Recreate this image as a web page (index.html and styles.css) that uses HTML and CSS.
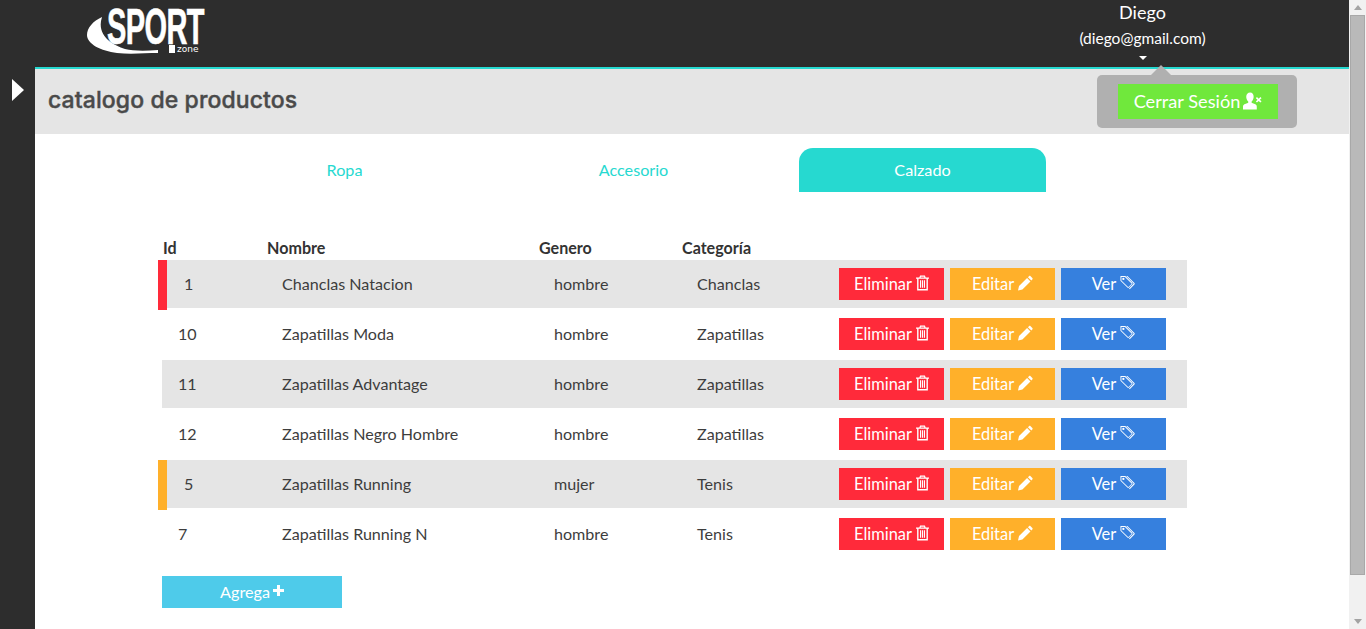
FILE: index.html
```html
<!DOCTYPE html>
<html lang="en">
<head>
  <meta charset="UTF-8" />
  <title>Sport Zone - catalogo de productos</title>
  <link rel="stylesheet" href="styles.css">
</head>
<body>
  <svg class="icon-defs" width="0" height="0">
    <symbol id="i-trash" viewBox="0 0 14 16">
      <path d="M4.400 0h5.200l.8 2H14v1.500h-1.200V16H1.200V3.500H0V2h3.600zM2.700 3.500v11h8.600v-11zM5.300 1.300L5 2h4l-.3-.7zM4.300 5h1.200v8H4.300zM6.400 5h1.200v8H6.400zM8.500 5h1.200v8H8.500z" fill-rule="evenodd"/>
    </symbol>
    <symbol id="i-pencil" viewBox="0 0 16 16">
      <path d="M0 16l1.100-4.700 8.600-8.600 3.600 3.600-8.600 8.600zM10.600 1.800l1.100-1.100c.5-.5 1.200-.5 1.700 0l1.900 1.900c.5.500.5 1.200 0 1.700l-1.100 1.100z"/>
    </symbol>
    <symbol id="i-tag" viewBox="0 0 16 16">
      <path d="M.5.500h5.200l7.300 7.300c.5.500.5 1.100 0 1.600l-3.500 3.500c-.5.500-1.100.5-1.600 0L.5 5.600zM1.500 1.500v3.700l7.100 7.100c.1.100.3.100.4 0l3.300-3.300c.1-.1.1-.3 0-.4L5.200 1.500zM3.600 2.400a1.200 1.200 0 1 1 0 2.400 1.200 1.200 0 0 1 0-2.400zM6.600.5h1.300l7.500 7.400c.5.500.5 1.100 0 1.600l-5 5.200-.8-.8 4.900-5c.1-.1.1-.3 0-.4z" fill-rule="evenodd"/>
    </symbol>
    <symbol id="i-user-x" viewBox="0 0 20 18">
      <path d="M7.500 0c2.400 0 3.700 1.900 3.700 4.500 0 2-.8 3.700-1.900 4.700-.5.500-.4 1.500.3 1.800l3.400 1.500c1 .5 1.500 1.300 1.500 2.500V18H0v-3c0-1.200.6-2 1.500-2.500L5 11c.7-.3.800-1.300.3-1.800C4.200 8.200 3.400 6.500 3.400 4.500 3.400 1.900 5.100 0 7.500 0z"/>
      <path d="M13.500 6l1.200-1.100 1.800 1.800 1.800-1.800L19.500 6l-1.800 1.800 1.800 1.800-1.200 1.100-1.800-1.800-1.800 1.800-1.200-1.100 1.800-1.800z"/>
    </symbol>
  </svg>

  <div class="page">
    <aside class="sidebar"><span class="sidebar-toggle"></span></aside>

    <div class="main">
      <header class="topbar">
        <a class="logo">
          <svg class="logo-swoosh" viewBox="0 0 72 46"><path d="M15 9C6 13 0 20 0 27c0 9 14 16 30 18 14 1.500 28 0 41 0v-3c-13 1-25 1-33-1C25 37 9 27 15 9z" fill="#fff"/></svg>
          <span class="logo-word">SPORT</span>
          <span class="logo-zone">zone</span>
        </a>
        <div class="user-menu">
          <div class="user-name">Diego</div>
          <div class="user-mail">(diego@gmail.com)</div>
          <span class="user-caret"></span>
          <div class="logout-pop">
            <button class="btn-logout">Cerrar Sesión <svg class="ico-user"><use href="#i-user-x"/></svg></button>
          </div>
        </div>
      </header>

      <div class="title-bar"><h1>catalogo de productos</h1></div>

      <nav class="tabs">
        <a class="tab">Ropa</a>
        <a class="tab">Accesorio</a>
        <a class="tab active">Calzado</a>
      </nav>

      <section class="catalog">
        <div class="row head">
          <div class="head-id">Id</div><div>Nombre</div><div>Genero</div><div>Categoría</div>
        </div>

        <div class="row item mark-red">
          <div class="cell-id">1</div><div class="cell">Chanclas Natacion</div><div class="cell">hombre</div><div class="cell">Chanclas</div>
          <div class="actions">
            <button class="btn red">Eliminar <svg class="ico ico-trash"><use href="#i-trash"/></svg></button>
            <button class="btn orange">Editar <svg class="ico"><use href="#i-pencil"/></svg></button>
            <button class="btn blue">Ver <svg class="ico"><use href="#i-tag"/></svg></button>
          </div>
        </div>
        <div class="row item">
          <div class="cell-id">10</div><div class="cell">Zapatillas Moda</div><div class="cell">hombre</div><div class="cell">Zapatillas</div>
          <div class="actions">
            <button class="btn red">Eliminar <svg class="ico ico-trash"><use href="#i-trash"/></svg></button>
            <button class="btn orange">Editar <svg class="ico"><use href="#i-pencil"/></svg></button>
            <button class="btn blue">Ver <svg class="ico"><use href="#i-tag"/></svg></button>
          </div>
        </div>
        <div class="row item">
          <div class="cell-id">11</div><div class="cell">Zapatillas Advantage</div><div class="cell">hombre</div><div class="cell">Zapatillas</div>
          <div class="actions">
            <button class="btn red">Eliminar <svg class="ico ico-trash"><use href="#i-trash"/></svg></button>
            <button class="btn orange">Editar <svg class="ico"><use href="#i-pencil"/></svg></button>
            <button class="btn blue">Ver <svg class="ico"><use href="#i-tag"/></svg></button>
          </div>
        </div>
        <div class="row item">
          <div class="cell-id">12</div><div class="cell">Zapatillas Negro Hombre</div><div class="cell">hombre</div><div class="cell">Zapatillas</div>
          <div class="actions">
            <button class="btn red">Eliminar <svg class="ico ico-trash"><use href="#i-trash"/></svg></button>
            <button class="btn orange">Editar <svg class="ico"><use href="#i-pencil"/></svg></button>
            <button class="btn blue">Ver <svg class="ico"><use href="#i-tag"/></svg></button>
          </div>
        </div>
        <div class="row item mark-orange">
          <div class="cell-id">5</div><div class="cell">Zapatillas Running</div><div class="cell">mujer</div><div class="cell">Tenis</div>
          <div class="actions">
            <button class="btn red">Eliminar <svg class="ico ico-trash"><use href="#i-trash"/></svg></button>
            <button class="btn orange">Editar <svg class="ico"><use href="#i-pencil"/></svg></button>
            <button class="btn blue">Ver <svg class="ico"><use href="#i-tag"/></svg></button>
          </div>
        </div>
        <div class="row item">
          <div class="cell-id">7</div><div class="cell">Zapatillas Running N</div><div class="cell">hombre</div><div class="cell">Tenis</div>
          <div class="actions">
            <button class="btn red">Eliminar <svg class="ico ico-trash"><use href="#i-trash"/></svg></button>
            <button class="btn orange">Editar <svg class="ico"><use href="#i-pencil"/></svg></button>
            <button class="btn blue">Ver <svg class="ico"><use href="#i-tag"/></svg></button>
          </div>
        </div>

        <button class="btn-add">Agrega <span class="plus"></span></button>
      </section>
    </div>

    <div class="scrollbar">
      <span class="arrow up"></span>
      <span class="thumb"></span>
      <span class="arrow down"></span>
    </div>
  </div>
</body>
</html>
```

FILE: styles.css
```css
* {
  box-sizing: border-box;
}
html, body {
  margin: 0;
  height: 629px;
  overflow: hidden;
}
body {
  font-family: 'Lato', sans-serif;
  background: #2d2d2d;
  color: #333;
}
.icon-defs {
  position: absolute;
}
.page {
  display: flex;
  height: 629px;
}

.sidebar {
  width: 35px;
  flex: none;
  padding: 79px 0 0 12px;
}
.sidebar-toggle {
  display: block;
  width: 0;
  height: 0;
  border-left: 12px solid #fff;
  border-top: 11px solid transparent;
  border-bottom: 11px solid transparent;
}

.main {
  flex: 1;
  min-width: 0;
  background: #fff;
  position: relative;
}
.scrollbar {
  width: 17px;
  flex: none;
  background: #f1f1f1;
  display: flex;
  flex-direction: column;
  align-items: center;
}
.thumb {
  width: 15px;
  height: 560px;
  background: #b9b9b9;
  border: 1px solid #a8a8a8;
}
.arrow {
  width: 0;
  height: 0;
  border-left: 4px solid transparent;
  border-right: 4px solid transparent;
}
.arrow.up {
  border-bottom: 5px solid #a3a3a3;
  margin: 5px 0 5px;
}
.arrow.down {
  border-top: 5px solid #a3a3a3;
  margin-top: 44px;
}

.topbar {
  height: 69px;
  padding-left: 52px;
  background: #2d2d2d;
  border-bottom: 2px solid #26d9d0;
  position: relative;
}
.logo {
  display: block;
  position: relative;
  width: 120px;
  height: 60px;
}
.logo-swoosh {
  position: absolute;
  left: 0;
  top: 8px;
  width: 72px;
  height: 46px;
}
.logo-word {
  position: absolute;
  left: 20px;
  top: 9px;
  font-family: 'Liberation Sans', sans-serif;
  font-weight: 700;
  font-size: 50px;
  line-height: 36px;
  color: #fff;
  transform: scaleX(0.58);
  transform-origin: left top;
  letter-spacing: -1px;
  -webkit-text-stroke: 0.6px #fff;
}
.logo-zone {
  position: absolute;
  left: 82px;
  top: 45px;
  height: 8px;
  padding-left: 2px;
  border-left: 6px solid #fff;
  font-family: 'DejaVu Sans', sans-serif;
  font-size: 9px;
  line-height: 8px;
  color: #fff;
}

.user-menu {
  position: absolute;
  left: 1040px;
  top: 0;
  width: 135px;
  text-align: center;
  color: #fff;
}
.user-name {
  font-size: 18px;
  line-height: 24px;
}
.user-mail {
  margin: 3px -5px 0;
  padding-top: 1px;
  font-size: 15.5px;
  line-height: 20px;
  white-space: nowrap;
}
.user-caret {
  display: block;
  width: 0;
  height: 0;
  margin: 8px auto 0;
  border-left: 4px solid transparent;
  border-right: 4px solid transparent;
  border-top: 4px solid #fff;
}
.logout-pop {
  position: absolute;
  left: 22px;
  top: 75px;
  width: 200px;
  height: 53px;
  padding: 9px 21px;
  background: #b0b0b0;
  border-radius: 5px;
}
.logout-pop::before {
  content: "";
  position: absolute;
  left: 54px;
  top: -10px;
  border-left: 10px solid transparent;
  border-right: 10px solid transparent;
  border-bottom: 10px solid #b0b0b0;
}
.btn-logout {
  display: flex;
  align-items: center;
  justify-content: center;
  gap: 3px;
  width: 160px;
  height: 35px;
  padding: 0 0 1px;
  border: none;
  background: #70e83c;
  color: #fff;
  font-family: inherit;
  font-size: 18.2px;
}
.ico-user {
  width: 19px;
  height: 18px;
  fill: #fff;
}

.title-bar {
  height: 65px;
  padding: 0 13px 4px;
  background: #e5e5e5;
  display: flex;
  align-items: center;
}
h1 {
  margin: 0;
  font-family: 'Inter', sans-serif;
  font-size: 23px;
  font-weight: 500;
  letter-spacing: 0.1px;
  -webkit-text-stroke: 0.4px #4a4a4a;
  color: #4a4a4a;
}

.tabs {
  display: flex;
  margin: 14px 0 0 186px;
  height: 44px;
}
.tab {
  width: 247px;
  margin-right: 42px;
  border-radius: 14px 14px 0 0;
  font-size: 16.2px;
  line-height: 44px;
  text-align: center;
  color: #26d9d0;
}
.tab.active {
  background: #26d9d0;
  color: #fff;
}

.catalog {
  margin: 44px 0 0 127px;
  width: 1025px;
}
.row {
  display: grid;
  grid-template-columns: 105px 272px 143px 142px 1fr;
}
.row.head {
  height: 24px;
  font-size: 16.1px;
  font-weight: 700;
  line-height: 23px;
  color: #333;
}
.head-id {
  padding-left: 1px;
}
.row.item {
  position: relative;
  height: 48px;
  margin-bottom: 2px;
  align-items: center;
  font-size: 16.1px;
  color: #3d3d3d;
}
.row.item:nth-of-type(even) {
  background: #e5e5e5;
}
.mark-red::before,
.mark-orange::before {
  content: "";
  position: absolute;
  left: -4px;
  top: 0;
  width: 9px;
  height: 50px;
}
.mark-red::before {
  background: #ff2a3a;
}
.mark-orange::before {
  background: #ffb02a;
}
.cell-id {
  padding: 0 0 2px 16px;
}
.mark-red .cell-id,
.mark-orange .cell-id {
  padding-left: 22px;
}
.cell {
  padding: 0 0 2px 15px;
}
.actions {
  display: flex;
  gap: 6px;
  margin-left: 15px;
}
.btn {
  display: flex;
  align-items: center;
  justify-content: center;
  gap: 4px;
  width: 105px;
  height: 32px;
  padding: 0 0 1px;
  border: none;
  color: #fff;
  font-family: inherit;
  font-size: 16.4px;
}
.btn.red {
  background: #ff2a3a;
}
.btn.orange {
  background: #ffb02a;
}
.btn.blue {
  background: #3680de;
}
.ico {
  width: 15px;
  height: 16px;
  margin-bottom: 1px;
  fill: #fff;
}
.ico-trash {
  width: 13px;
}
.btn-add {
  display: flex;
  align-items: center;
  justify-content: center;
  gap: 3px;
  width: 180px;
  height: 32px;
  margin-top: 18px;
  padding: 0 0 2px;
  border: none;
  background: #4ecbea;
  color: #fff;
  font-family: inherit;
  font-size: 16.2px;
}
.plus {
  display: block;
  width: 11px;
  height: 11px;
  margin-bottom: 2px;
  background: linear-gradient(#fff, #fff) center / 100% 3px no-repeat,
              linear-gradient(#fff, #fff) center / 3px 100% no-repeat;
}
```
